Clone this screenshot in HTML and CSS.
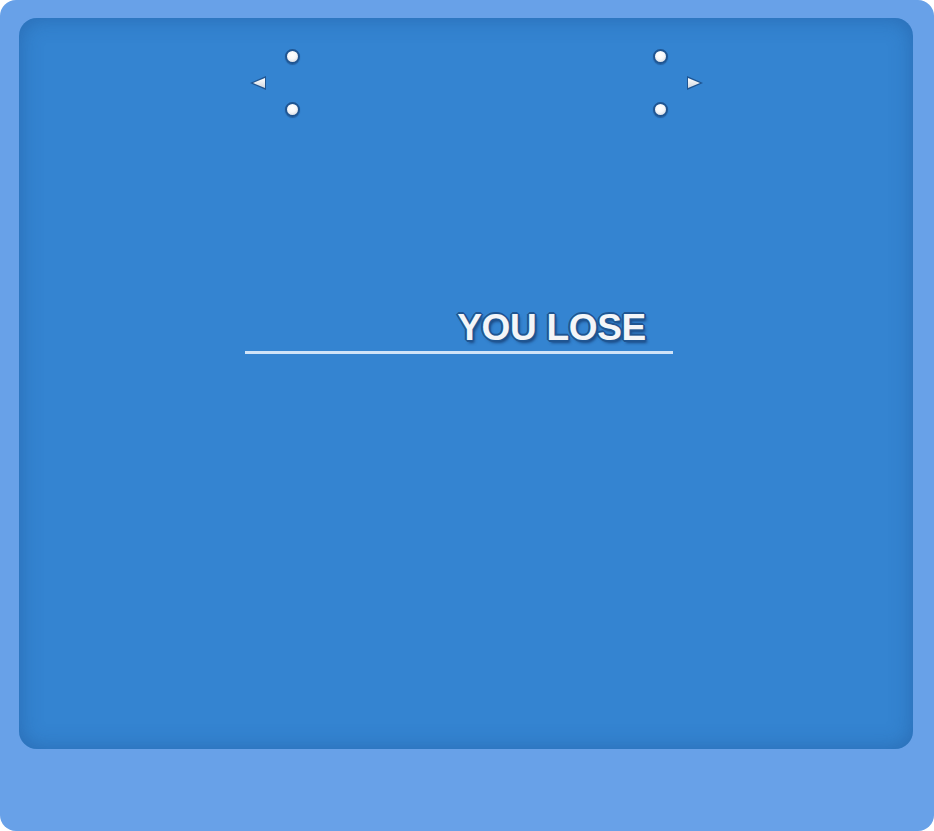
FILE: index.html
```html
<!DOCTYPE html>
<html>
<head>
<meta charset="utf-8">
<link rel="stylesheet" href="styles.css">
</head>
<body>
<div class="frame">
  <div class="screen">
    <div class="controls">
      <div class="cluster cluster-left">
        <span class="tri tri-left"></span>
        <div class="dots">
          <span class="dot"></span>
          <span class="dot"></span>
        </div>
      </div>
      <div class="cluster cluster-right">
        <div class="dots">
          <span class="dot"></span>
          <span class="dot"></span>
        </div>
        <span class="tri tri-right"></span>
      </div>
    </div>
    <div class="result">
      <h1 class="result-title">YOU LOSE</h1>
      <div class="result-rule"></div>
    </div>
  </div>
</div>
</body>
</html>
```
FILE: styles.css
```css
html, body {
  margin: 0;
  padding: 0;
  background: #ffffff;
}
body {
  width: 934px;
  height: 831px;
  overflow: hidden;
  font-family: "Liberation Sans", Arial, sans-serif;
}
.frame {
  box-sizing: border-box;
  width: 934px;
  height: 831px;
  background: #68a1e8;
  border-radius: 16px;
  padding: 18px 21px 82px 19px;
}
.screen {
  box-sizing: border-box;
  width: 894px;
  height: 731px;
  background: #3484d1;
  border-radius: 18px;
  box-shadow: inset 0 0 22px rgba(20, 60, 120, 0.35);
  padding-top: 31px;
}
.controls {
  display: flex;
  justify-content: space-between;
  width: 453px;
  margin-left: 231px;
}
.cluster {
  display: flex;
  align-items: center;
}
.cluster-left { gap: 19px; }
.cluster-right { gap: 19px; }
.dots {
  display: flex;
  flex-direction: column;
  gap: 38px;
}
.dot {
  display: block;
  box-sizing: border-box;
  width: 15px;
  height: 15px;
  border-radius: 50%;
  border: 2px solid #1f5592;
  background: radial-gradient(circle at 45% 35%, #ffffff 0%, #f7f8fa 45%, #c9d0da 100%);
  box-shadow: 0 1px 1px rgba(10, 40, 90, 0.4);
}
.tri {
  display: block;
  width: 16px;
  height: 14px;
  background: #1f5592;
  position: relative;
}
.tri::after {
  content: "";
  position: absolute;
  inset: 2px 2px;
  background: linear-gradient(#ffffff, #cfd6df);
}
.tri-left, .tri-left::after {
  clip-path: polygon(0 50%, 100% 0, 100% 100%);
}
.tri-right, .tri-right::after {
  clip-path: polygon(0 0, 100% 50%, 0 100%);
}
.tri-left::after { inset: 2px 1px 2px 3px; }
.tri-right::after { inset: 2px 3px 2px 1px; }
.result {
  width: 428px;
  margin-left: 226px;
  margin-top: 190px;
}
.result-title {
  margin: 0;
  padding-right: 27px;
  text-align: right;
  font-size: 37px;
  font-weight: 700;
  line-height: 42px;
  letter-spacing: -0.3px;
  color: #f3f5f8;
  text-shadow:
    1px 0 0 #1f5592, -1px 0 0 #1f5592, 0 1px 0 #1f5592, 0 -1px 0 #1f5592,
    1px 1px 0 #1f5592, -1px 1px 0 #1f5592, 1px -1px 0 #1f5592, -1px -1px 0 #1f5592,
    2px 0 0 #1f5592, -2px 0 0 #1f5592, 0 2px 0 #1f5592, 0 -2px 0 #1f5592,
    2px 3px 3px rgba(15, 45, 95, 0.7);
}
.result-rule {
  margin-top: 2px;
  height: 3px;
  background: #cfe3f8;
}
```
